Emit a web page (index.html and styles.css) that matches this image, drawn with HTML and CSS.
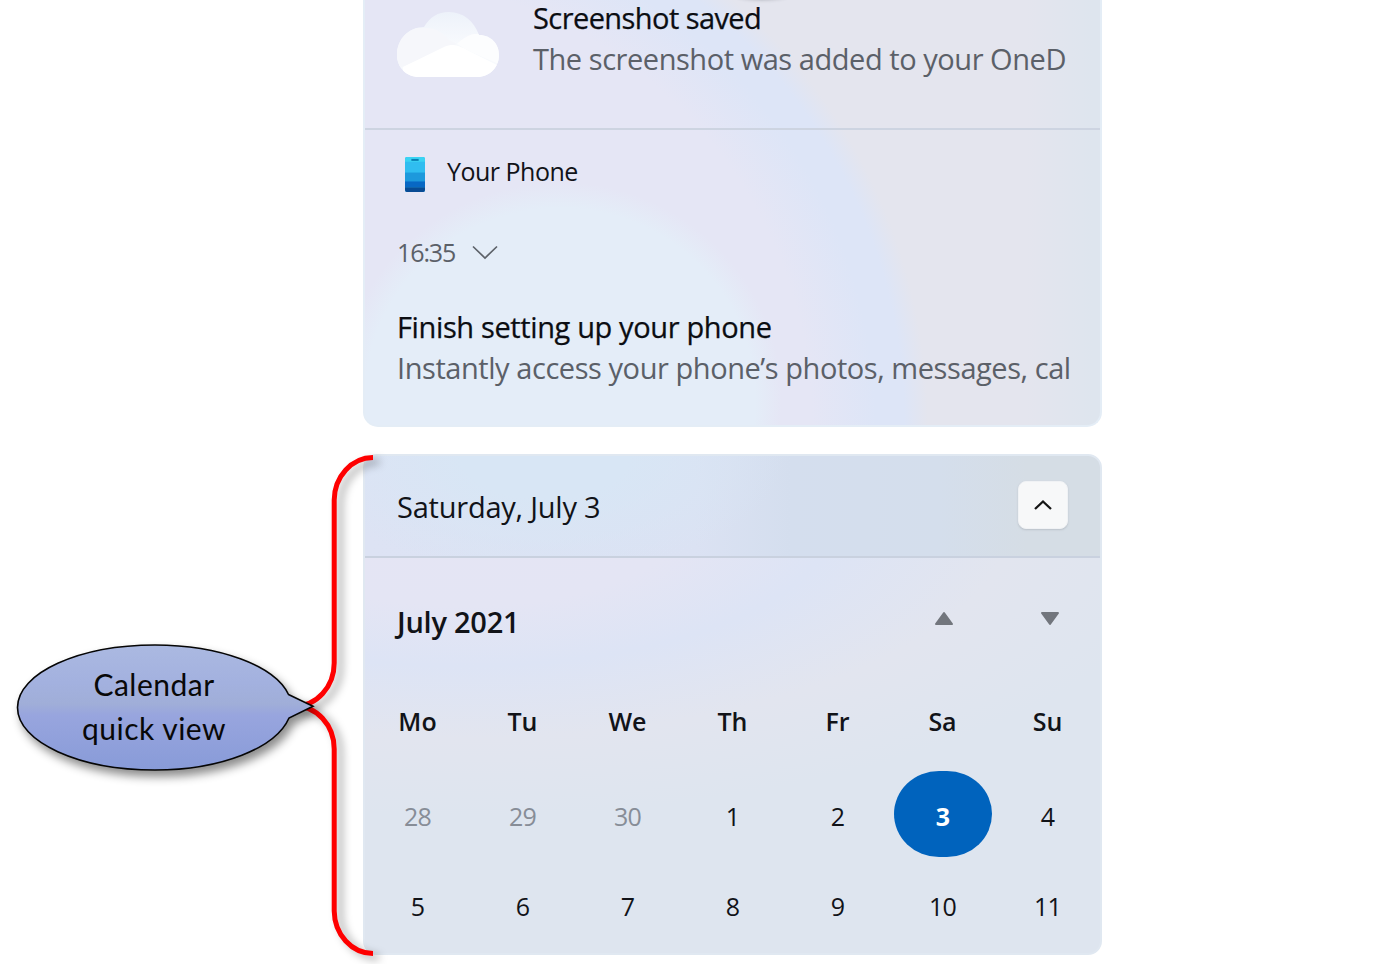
FILE: index.html
```html
<!DOCTYPE html>
<html lang="en">
<head>
<meta charset="utf-8">
<title>Calendar quick view</title>
<link rel="stylesheet" href="styles.css">
</head>
<body>
<main class="stage">
  <div class="panels">
    <section class="card notifications">
      <div class="pointer-shadow"></div>
      <article class="notice saved">
        <svg class="cloud" width="102" height="66" viewBox="0 0 102 66">
          <defs>
            <linearGradient id="cloudTop" x1="0" y1="0" x2="0" y2="1"><stop offset="0" stop-color="#edf2fa"/><stop offset=".5" stop-color="#f8fafd"/></linearGradient>
            <clipPath id="cloudClip"><path d="M22 65C9 65 0 55 0 43C0 27 12 15 27 15C33 5 41 0 52 0C66 0 77 9 82 23C94 23 102 32 102 43C102 55 93 65 80 65Z"/></clipPath>
          </defs>
          <g clip-path="url(#cloudClip)">
            <path fill="url(#cloudTop)" d="M0 0H102V66H0Z"/>
            <path fill="#f6f7fb" d="M0 16H30C39 16 46 21 52 28L60 32L0 57Z"/>
            <path fill="#fff" d="M6 55L47 35C58 30 64 35 76 41L100 53V66H6Z"/>
            <path fill="#fcfdfe" d="M60 32C68 24 76 21 84 22C110 25 102 43 102 52L74 40C68 37 64 34 60 32Z"/>
          </g>
        </svg>
        <div class="copy">
          <h2 class="title t-saved">Screenshot saved</h2>
          <p class="text t-added">The screenshot was added to your OneD</p>
        </div>
      </article>
      <article class="phone">
        <header class="app">
          <svg class="phone-icon" width="20" height="35" viewBox="0 0 22 36" preserveAspectRatio="none">
            <rect width="22" height="36" rx="2" fill="#30bdf0"/>
            <path fill="#1d99dc" d="M0 16H22V25H0Z"/>
            <path fill="#0868c4" d="M0 25H22V31H0Z"/>
            <path fill="#084b94" d="M0 31H22V34Q22 36 20 36H2Q0 36 0 34Z"/>
            <path fill="#3ad3f3" d="M2 0H20Q22 0 22 2V5H0V2Q0 0 2 0Z"/>
            <path stroke="#087fb3" stroke-width="2" d="M7 3H15"/>
          </svg>
          <span class="app-name">Your Phone</span>
        </header>
        <div class="time"><span class="clock">16:35</span>
          <svg width="26" height="15" viewBox="0 0 26 15"><path d="M1 1.5L13 13L25 1.5" fill="none" stroke="#5d6269" stroke-width="1.7"/></svg>
        </div>
        <h2 class="title t-finish">Finish setting up your phone</h2>
        <p class="text t-instant">Instantly access your phone’s photos, messages, cal</p>
      </article>
    </section>
    <section class="card calendar">
      <header class="today"><span class="date">Saturday, July 3</span>
        <button class="collapse" aria-label="Collapse"><svg width="20" height="12" viewBox="0 0 20 12"><path d="M2 10L10 2.5L18 10" fill="none" stroke="#161616" stroke-width="2.3"/></svg></button>
      </header>
      <div class="month"><span class="month-name">July 2021</span>
        <svg class="up" width="20" height="15" viewBox="0 0 20 15"><path d="M10 2L18 13H2Z" fill="#72767d" stroke="#72767d" stroke-width="2" stroke-linejoin="round"/></svg>
        <svg class="down" width="20" height="15" viewBox="0 0 20 15"><path d="M10 13L18 2H2Z" fill="#72767d" stroke="#72767d" stroke-width="2" stroke-linejoin="round"/></svg>
      </div>
      <div class="week names"><span>Mo</span><span>Tu</span><span>We</span><span>Th</span><span>Fr</span><span>Sa</span><span>Su</span></div>
      <div class="week days"><span class="out">28</span><span class="out">29</span><span class="out">30</span><span>1</span><span>2</span><span class="selected">3</span><span>4</span></div>
      <div class="week days"><span>5</span><span>6</span><span>7</span><span>8</span><span>9</span><span>10</span><span>11</span></div>
    </section>
  </div>
  <div class="annotation">
    <svg width="390" height="964" viewBox="0 0 390 964">
      <defs><linearGradient id="bubble" x1="0" y1="0" x2="0" y2="1"><stop offset="0" stop-color="#abb9e1"/><stop offset=".3" stop-color="#a3b1df"/><stop offset=".47" stop-color="#a0aed8"/><stop offset=".56" stop-color="#98a5de"/><stop offset="1" stop-color="#889bd8"/></linearGradient></defs>
      <path class="brace" d="M373 457.5A39 43 0 0 0 334.2 500V663A39 43 0 0 1 295 706A39 43 0 0 1 334.2 749V911A39 43 0 0 0 373 953.5"/>
      <path class="bubble" fill="url(#bubble)" d="M288.5 694.5L313 706.2L289 718C276 748 221 770 155 770C79 770 17.500 742 17.500 707.500C17.500 673 79 645 155 645C220 645 275 666 288.500 694.500Z"/>
    </svg>
    <p class="label"><span class="label-top">Calendar</span><span class="label-bottom">quick view</span></p>
  </div>
</main>
</body>
</html>
```
FILE: styles.css
```css
* { box-sizing: border-box; }
body { margin: 0; background: #fff; color: #111318; font-family: "Open Sans", "Noto Sans", sans-serif; }
h2, p { margin: 0; font-weight: 400; }
.stage { position: relative; height: 964px; overflow: hidden; padding-left: 363px; }
.panels { width: 739px; display: flex; flex-direction: column; gap: 28px; }
.card { overflow: hidden; border: 2px solid #e4edf6; }
.notifications {
  position: relative; height: 427px; border-top: 0; border-radius: 0 0 15px 15px;
  background:
    radial-gradient(ellipse 222px 218px at 195px 400px, #e4edf8 88%, rgba(228,237,248,0) 100%),
    linear-gradient(90deg, rgba(221,229,238,0) 90%, #dee5ee 99%),
    radial-gradient(circle 580px at 0 425px, #e5e6f5 77%, #dde5f7 88%, #dde5f7 93%, #e4e5ee 97%);
}
.pointer-shadow { position: absolute; left: 372px; top: -11px; width: 50px; height: 10px; border-radius: 50%; box-shadow: 0 0 4px #8e9299; }
.notice { height: 130px; border-bottom: 2px solid #cdd4e1; padding-left: 32px; display: flex; }
.cloud { margin-top: 12px; flex: none; }
.copy { padding-left: 34px; }
.title, .text, .date, .month-name { font-size: 29px; white-space: nowrap; }
.title { color: #0b0d12; -webkit-text-stroke: .25px #0b0d12; }
.text { color: #5b6068; }
.t-saved { line-height: 35px; letter-spacing: -.57px; }
.t-added { line-height: 47px; letter-spacing: -.45px; }
.phone { padding-left: 32px; }
.app { height: 83px; display: flex; align-items: center; gap: 22px; padding-left: 8px; }
.phone-icon { margin-top: 5px; }
.app-name { font-size: 25px; letter-spacing: -.5px; margin-top: -2px; }
.time { height: 79px; display: flex; align-items: center; gap: 17px; font-size: 25px; color: #5b6068; }
.clock { letter-spacing: -1.1px; margin-top: -1px; }
.t-finish { margin-top: 15px; line-height: 40px; letter-spacing: -.37px; }
.t-instant { line-height: 41px; letter-spacing: -.44px; }
.calendar {
  height: 501px; border-color: #e0e8f1; border-radius: 14px; margin-top: -1px;
  background: radial-gradient(ellipse 740px 300px at 100px 60px, #e5e5f4 0, #e4e5f4 30%, #dde4f5 50%, #e2e5ef 74%, #dee5ef 100%);
}
.today {
  height: 102px; padding: 0 32px 0 32px; display: flex; align-items: center; justify-content: space-between; border-bottom: 2px solid #c9d1df;
  background: radial-gradient(ellipse 240px 120px at 180px 0, #d8e6f5 35%, rgba(216,230,245,0) 100%), linear-gradient(90deg, #dde3f4 0, #dbe2f3 45%, #d4deee 58%, #d4deec 78%, #d5dde5 90%);
}
.date { letter-spacing: -.22px; padding-top: 1px; }
.collapse { width: 50px; height: 48px; border: 1px solid #f0f2f5; border-radius: 8px; background: #f7f8f9; display: flex; align-items: center; justify-content: center; padding: 0; margin-top: -3px; box-shadow: 0 1px 2px #bac1c9; }
.month { height: 126px; padding: 0 40px 0 32px; display: flex; align-items: center; }
.month-name { font-weight: 600; letter-spacing: -.25px; margin-right: auto; }
.up { margin-right: 86px; margin-top: -5px; }
.down { margin-top: -5px; }
.week { display: grid; grid-template-columns: repeat(7, 1fr); text-align: center; font-size: 25px; }
.names { height: 74px; line-height: 74px; font-weight: 600; margin-bottom: 13px; }
.days { height: 90px; line-height: 90px; letter-spacing: -.8px; }
.out { color: #878d97; }
.selected { justify-self: center; width: 98px; height: 86px; border-radius: 45px / 43px; background: #0063bd; color: #fff; font-weight: 700; }
.annotation { position: absolute; left: 0; top: 0; }
.annotation svg { display: block; }
.brace { fill: none; stroke: #fe0000; stroke-width: 5; filter: drop-shadow(6px 4px 4px rgba(0,0,0,.34)); }
.bubble { stroke: #050505; stroke-width: 1.6; filter: drop-shadow(4px 6px 5px rgba(0,0,0,.45)); }
.label { position: absolute; left: 18px; top: 662px; width: 272px; display: flex; flex-direction: column; text-align: center; font: 30px/44px Lato, sans-serif; letter-spacing: .5px; color: #080808; }
```
